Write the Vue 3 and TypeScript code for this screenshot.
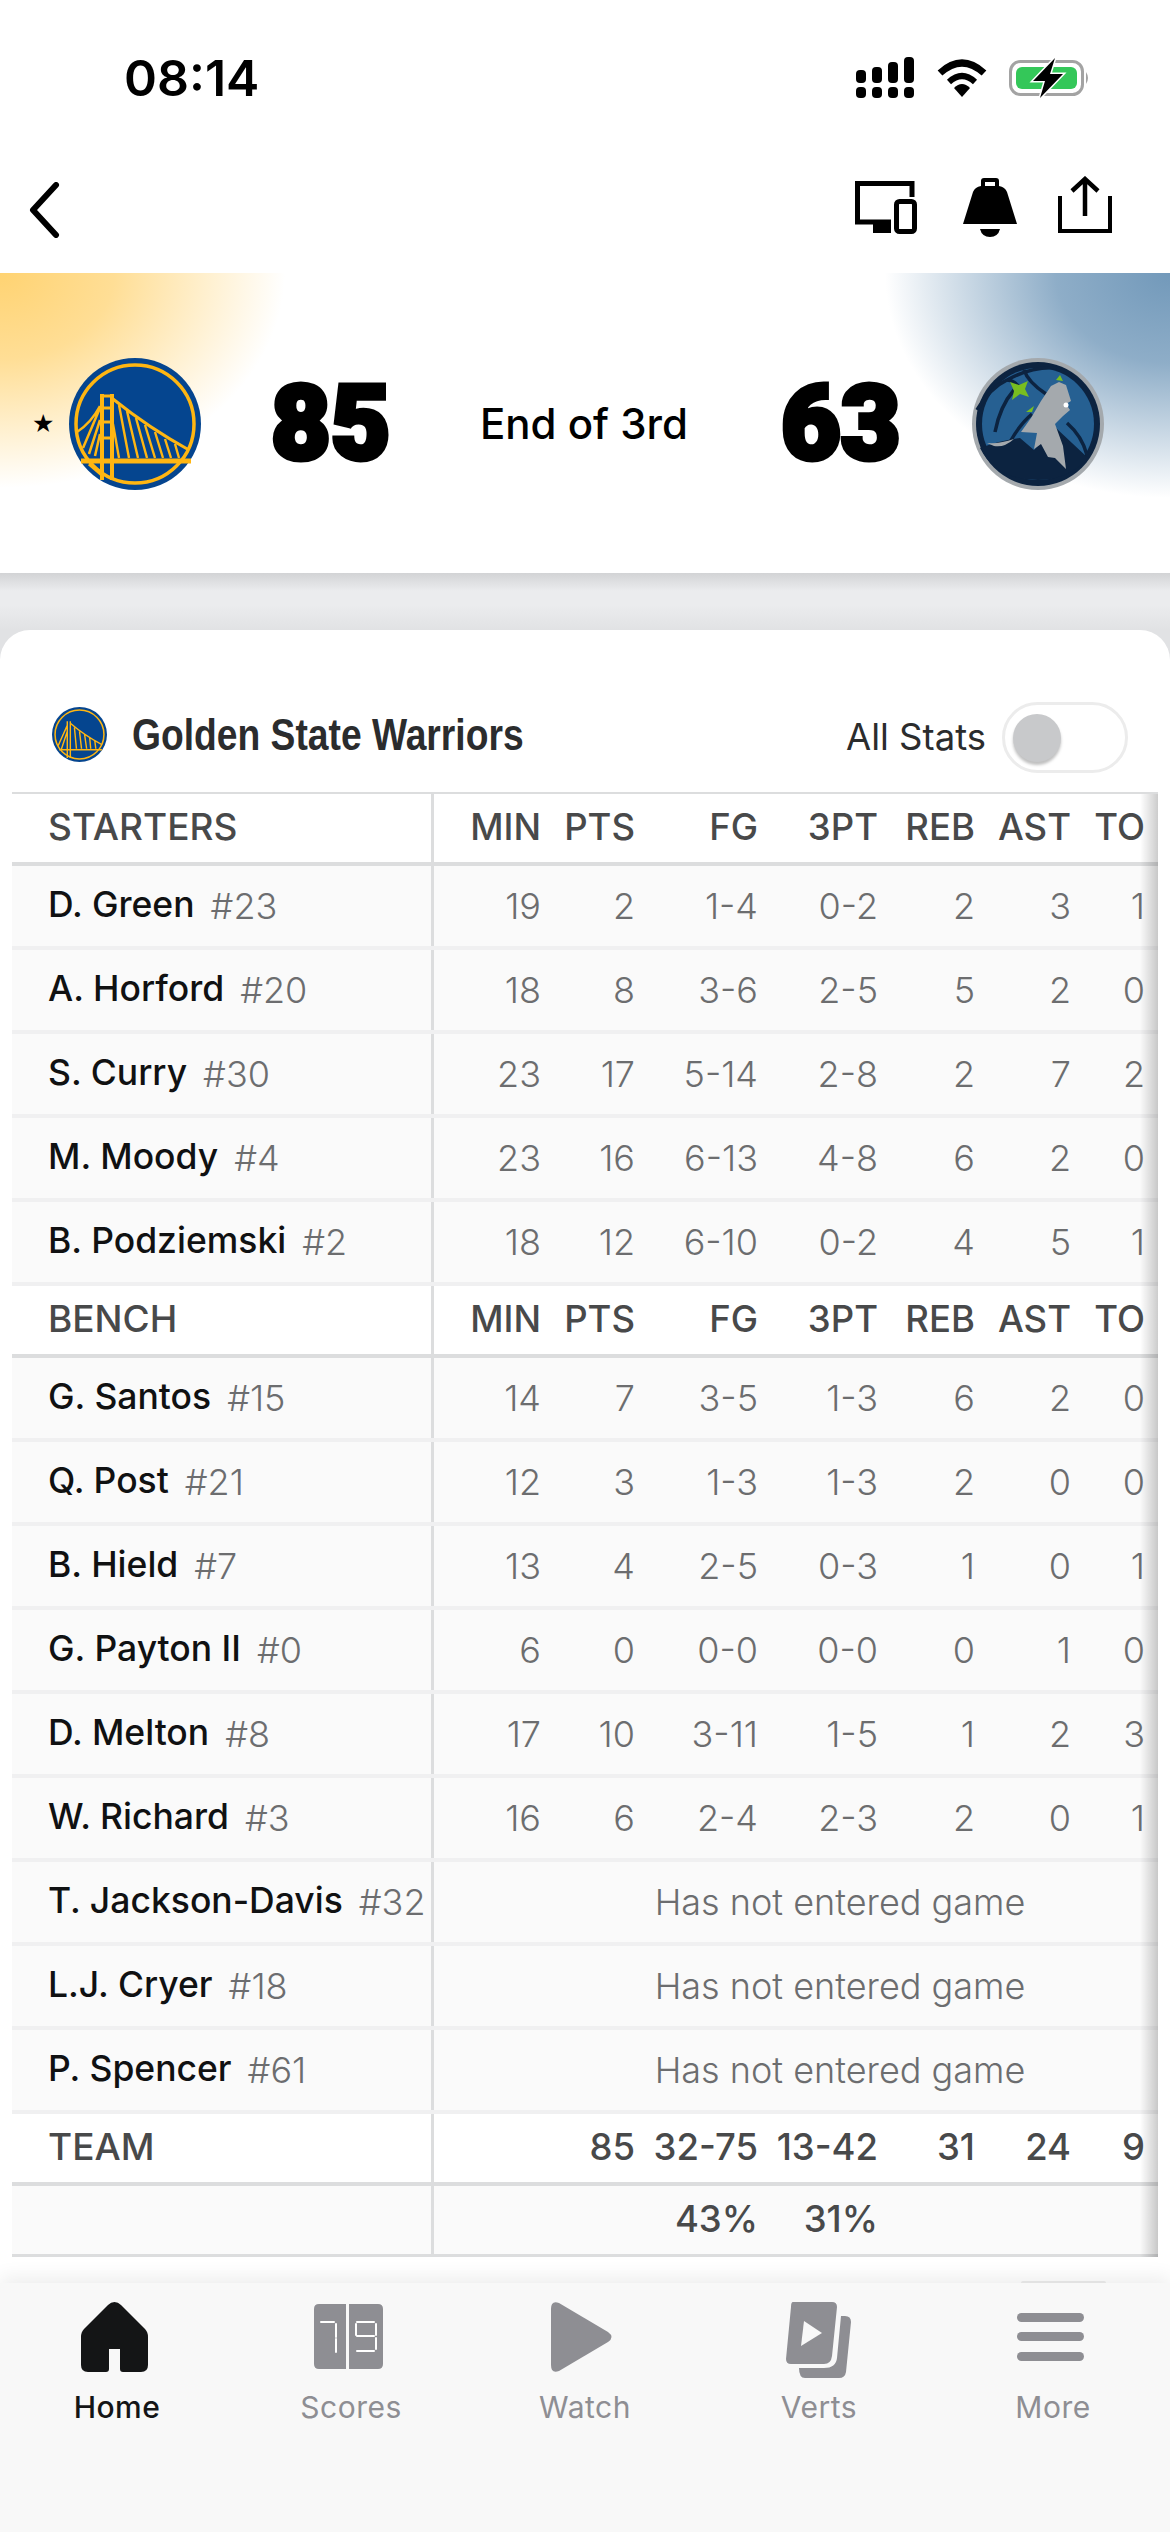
<script setup lang="ts">
interface Player { name: string; num: string; stats?: (string | number)[] }
const cols = ['MIN', 'PTS', 'FG', '3PT', 'REB', 'AST', 'TO']
const starters: Player[] = [
  { name: 'D. Green', num: '#23', stats: [19, 2, '1-4', '0-2', 2, 3, 1] },
  { name: 'A. Horford', num: '#20', stats: [18, 8, '3-6', '2-5', 5, 2, 0] },
  { name: 'S. Curry', num: '#30', stats: [23, 17, '5-14', '2-8', 2, 7, 2] },
  { name: 'M. Moody', num: '#4', stats: [23, 16, '6-13', '4-8', 6, 2, 0] },
  { name: 'B. Podziemski', num: '#2', stats: [18, 12, '6-10', '0-2', 4, 5, 1] },
]
const bench: Player[] = [
  { name: 'G. Santos', num: '#15', stats: [14, 7, '3-5', '1-3', 6, 2, 0] },
  { name: 'Q. Post', num: '#21', stats: [12, 3, '1-3', '1-3', 2, 0, 0] },
  { name: 'B. Hield', num: '#7', stats: [13, 4, '2-5', '0-3', 1, 0, 1] },
  { name: 'G. Payton II', num: '#0', stats: [6, 0, '0-0', '0-0', 0, 1, 0] },
  { name: 'D. Melton', num: '#8', stats: [17, 10, '3-11', '1-5', 1, 2, 3] },
  { name: 'W. Richard', num: '#3', stats: [16, 6, '2-4', '2-3', 2, 0, 1] },
  { name: 'T. Jackson-Davis', num: '#32' },
  { name: 'L.J. Cryer', num: '#18' },
  { name: 'P. Spencer', num: '#61' },
]
const groups = [
  { title: 'STARTERS', players: starters },
  { title: 'BENCH', players: bench },
]
const team = ['', 85, '32-75', '13-42', 31, 24, 9]
const pct = ['', '', '43%', '31%', '', '', '']
</script>

<template>
  <div class="app">
    <div class="top">
      <div class="status">
        <span class="time">08:14</span>
        <div class="status-icons">
          <svg width="60" height="42" viewBox="0 0 60 42">
            <rect x="1" y="13" width="10" height="13" rx="4" /><rect x="17" y="10" width="10" height="16" rx="4" /><rect x="33" y="5" width="10" height="21" rx="4" /><rect x="49" y="0" width="10" height="26" rx="4" />
            <rect x="1" y="30" width="10" height="11" rx="4" /><rect x="17" y="30" width="10" height="11" rx="4" /><rect x="33" y="30" width="10" height="11" rx="4" /><rect x="49" y="30" width="10" height="11" rx="4" />
          </svg>
          <svg width="50" height="38" viewBox="0 0 50 38">
            <path d="M3 14 Q25 -6 47 14" fill="none" stroke="#000" stroke-width="7" />
            <path d="M12 23 Q25 11 38 23" fill="none" stroke="#000" stroke-width="6" />
            <path d="M17 29 Q25 21 33 29 L25 38 Z" />
          </svg>
          <svg width="82" height="40" viewBox="0 0 82 40">
            <rect x="1.5" y="3.5" width="72" height="33" rx="10" fill="none" stroke="#a3a3a3" stroke-width="3" />
            <rect x="7" y="9" width="61" height="22" rx="6" fill="#34c759" />
            <path d="M77 14 Q81 20 77 26 Z" fill="#a3a3a3" />
            <path d="M46 0 L24 23 H36 L31 40 L54 16 H41 Z" stroke="#fff" stroke-width="3" paint-order="stroke" />
          </svg>
        </div>
      </div>
      <div class="nav">
        <svg class="back" width="36" height="56" viewBox="0 0 36 56"><path d="M30 3 L7 28 L30 53" fill="none" stroke="#000" stroke-width="6" stroke-linecap="round" stroke-linejoin="round" /></svg>
        <div class="nav-icons">
          <svg class="i-dev" width="62" height="62" viewBox="0 -5 62 62">
            <path d="M57 16 V2.5 H2.5 V41 H36" fill="none" stroke="#000" stroke-width="5" />
            <rect x="18" y="42" width="18" height="10" />
            <rect x="41.5" y="20.5" width="18" height="30" rx="3" fill="none" stroke="#000" stroke-width="5" />
          </svg>
          <svg class="i-bell" width="54" height="62" viewBox="1 0 54 62">
            <path d="M19 10 V5 Q19 2 22 2 H34 Q37 2 37 5 V10 Q43 11 45 16 L55 48 H1 L11 16 Q13 11 19 10 Z M23 6 V10 H33 V6 Z" fill-rule="evenodd" />
            <path d="M18 53 H38 Q36 61 28 61 Q20 61 18 53 Z" />
          </svg>
          <svg class="i-share" width="54" height="62" viewBox="0 0 54 62">
            <path d="M2 20 V55 H52 V20" fill="none" stroke="#000" stroke-width="4" />
            <path d="M27 40 V4 M14 15 L27 3 L40 15" fill="none" stroke="#000" stroke-width="4.5" />
          </svg>
        </div>
      </div>
    </div>

    <div class="hero">
      <div class="team-side">
        <span class="star">★</span>
        <svg class="logo" viewBox="0 0 132 132">
          <circle cx="66" cy="66" r="66" fill="#05458f" />
          <circle cx="66" cy="66" r="59" fill="none" stroke="#ffb612" stroke-width="3.5" />
          <g stroke="#ffb612" fill="none">
            <path d="M33 36 V122 M43 36 V122" stroke-width="4" />
            <path d="M33 38 h10 M33 50 h10 M33 64 h10 M33 80 h10" stroke-width="3" />
            <path d="M31 48 Q22 65 8 74 M31 50 L14 90 M31 62 L20 96 M31 76 L26 98" stroke-width="2.5" />
            <path d="M44 41 Q80 70 120 92" stroke-width="3" />
            <path d="M50 47 L60 100 M58 53 L69 100 M67 60 L78 100 M76 67 L86 100 M86 74 L94 100 M96 81 L102 100 M106 86 L110 100" stroke-width="2.4" />
            <path d="M44 66 L50 100" stroke-width="2.4" />
            <path d="M12 103 H122" stroke-width="5" />
            <path d="M20 106 L34 118" stroke-width="3" />
          </g>
        </svg>
      </div>
      <span class="score left">85</span>
      <span class="period">End of 3rd</span>
      <span class="score right">63</span>
      <svg class="logo wolves" viewBox="0 0 132 132">
        <circle cx="66" cy="66" r="66" fill="#a4a9ad" />
        <circle cx="66" cy="66" r="62" fill="#0c2340" />
        <circle cx="66" cy="66" r="56" fill="#266092" />
        <path d="M8 90 Q30 82 48 80 L62 92 L84 70 L116 100 Q96 122 66 122 Q24 122 8 90 Z" fill="#0c2340" />
        <g fill="none" stroke="#0c2340" stroke-width="3.5">
          <path d="M5 52 Q18 30 35 22 Q60 8 85 10" />
          <path d="M42 32 Q28 48 23 74" />
          <path d="M52 12 Q56 24 74 36" />
          <path d="M35 22 Q42 22 48 30" />
          <path d="M95 65 Q110 78 115 97" />
          <path d="M60 56 Q48 66 38 84" />
        </g>
        <path d="M79 28 L87 24 L94 27 L99 43 L94 46 L98 52 L91 58 L83 66 L91 88 L94 111 L83 100 L76 99 L69 86 L62 91 L65 75 L49 74 L59 60 L69 43 Z" fill="#a4a9ad" />
        <path d="M15 85 Q28 86 42 81 Q32 90 22 88 Z" fill="#a4a9ad" />
        <path d="M38 24 L47 27 L56 23 L53 31 L57 39 L48 36 L40 42 L42 33 Z" fill="#78be20" />
        <path d="M54 54 L62 48 L60 54 Z M84 22 L88 17 L91 23 Z" fill="#78be20" />
        <circle cx="94" cy="47" r="2.5" fill="#fff" />
      </svg>
    </div>

    <div class="body">
      <div class="card">
        <div class="card-head">
          <div class="card-title">
            <svg class="mini" viewBox="0 0 54 54">
              <circle cx="27" cy="27" r="27" fill="#05458f" />
              <circle cx="27" cy="27" r="24" fill="none" stroke="#ffb612" stroke-width="1.5" />
              <path d="M15 14 V50 M18 14 V50 M15 18 L6 38 M15 24 L9 42 M18 16 Q32 28 49 37 M22 20 L24 41 M27 24 L29 41 M32 27 L34 41 M37 30 L38 41 M42 33 L43 41 M7 42 H49" stroke="#ffb612" stroke-width="1.4" fill="none" />
            </svg>
            <span class="team-name">Golden State Warriors</span>
          </div>
          <div class="toggle-wrap">
            <span class="all">All Stats</span>
            <span class="toggle"><span class="knob"></span></span>
          </div>
        </div>

        <div class="table">
          <template v-for="g in groups" :key="g.title">
            <div class="row head">
              <div class="name-cell">{{ g.title }}</div>
              <div class="stats"><span v-for="c in cols" :key="c" class="c">{{ c }}</span></div>
            </div>
            <div v-for="p in g.players" :key="p.name" class="row player">
              <div class="name-cell">
                <span class="pname">{{ p.name }}</span><span class="pnum">{{ p.num }}</span>
              </div>
              <div v-if="p.stats" class="stats"><span v-for="(s, i) in p.stats" :key="i" class="c">{{ s }}</span></div>
              <div v-else class="stats dnp">Has not entered game</div>
            </div>
          </template>
          <div class="row head">
            <div class="name-cell">TEAM</div>
            <div class="stats"><span v-for="(s, i) in team" :key="i" class="c">{{ s }}</span></div>
          </div>
          <div class="row head pct">
            <div class="name-cell"></div>
            <div class="stats"><span v-for="(s, i) in pct" :key="i" class="c">{{ s }}</span></div>
          </div>
          <div class="edge"></div>
        </div>
      </div>
    </div>

    <div class="tabbar">
      <span class="peek"></span>
      <div class="tab on">
        <svg class="shift" width="67" height="76" viewBox="0 0 67 76"><path d="M33.5 0 Q30 0 27 3 L3 27 Q0 30 0 35 V63 Q0 70 7 70 H25 Q28 70 28 67 V47 H39 V67 Q39 70 42 70 H60 Q67 70 67 63 V35 Q67 30 64 27 L40 3 Q37 0 33.5 0 Z" /></svg>
        <span>Home</span>
      </div>
      <div class="tab">
        <svg class="shift" width="69" height="76" viewBox="0 -2 69 76">
          <path d="M5 0 H32 V65 H5 Q0 65 0 60 V5 Q0 0 5 0 Z M35 0 H64 Q69 0 69 5 V60 Q69 65 64 65 H35 Z" />
          <path d="M7 18 H20 M22 20 V33 M22 35 V48 M43 18 H60 M42 20 V31 M43 32 H60 M62 20 V31 M62 34 V45 M43 47 H60" stroke="#fff" stroke-width="2" stroke-linecap="round" fill="none" />
        </svg>
        <span>Scores</span>
      </div>
      <div class="tab">
        <svg class="shift" width="62" height="76" viewBox="0 0 62 76"><path d="M0 7 Q0 -2 8 1 L57 30 Q64 35 57 40 L8 69 Q0 72 0 63 Z" /></svg>
        <span>Watch</span>
      </div>
      <div class="tab">
        <svg width="66" height="76" viewBox="0 0 66 76">
          <path d="M7 0 H46 Q51 0 51 5 L46 54 Q45 62 38 62 H5 Q0 62 0 57 L5 5 Q5 0 7 0 Z" />
          <path d="M18 19 L36 31 L15 44 Z" fill="#f8f8f8" />
          <path d="M55 14 H59 Q65 14 65 20 L60 70 Q59 76 53 76 H19 Q13 76 13 66 H38 Q50 66 51 56 Z" />
        </svg>
        <span>Verts</span>
      </div>
      <div class="tab">
        <svg class="shift" width="67" height="76" viewBox="0 0 67 76">
          <rect x="0" y="11" width="67" height="9" rx="4.5" /><rect x="0" y="30" width="67" height="9" rx="4.5" /><rect x="0" y="50" width="67" height="9" rx="4.5" />
        </svg>
        <span>More</span>
      </div>
    </div>
  </div>
</template>

<style>
html, body { margin: 0; background: #fff; }
</style>

<style scoped>
.app {
  width: 1170px;
  height: 2532px;
  display: flex;
  flex-direction: column;
  overflow: hidden;
  font-family: Inter, "Liberation Sans", sans-serif;
  color: #000;
  background: #fff;
}
.top { height: 273px; flex: none; display: flex; flex-direction: column; }
.status {
  height: 156px;
  display: flex;
  justify-content: space-between;
  align-items: flex-start;
  padding: 50px 79px 0 124px;
  box-sizing: border-box;
}
.time { font-size: 50px; font-weight: 600; line-height: 56px; }
.status-icons { display: flex; gap: 22px; align-items: center; padding-top: 7px; }
.nav { flex: 1; display: flex; justify-content: space-between; align-items: flex-start; padding: 20px 58px 0 26px; }
.back { margin-top: 6px; }
.nav-icons { display: flex; align-items: flex-start; }
.i-bell { margin-left: 46px; }
.i-share { margin-left: 41px; }
.hero {
  height: 300px;
  flex: none;
  display: flex;
  align-items: flex-start;
  box-sizing: border-box;
  padding-top: 85px;
  background:
    radial-gradient(ellipse 285px 215px at 0 0, #ffd372 0%, rgba(255, 211, 114, 0.75) 40%, rgba(255, 211, 114, 0) 100%),
    radial-gradient(ellipse 285px 225px at 100% 0, #7299ba 0%, rgba(114, 153, 186, 0.8) 40%, rgba(114, 153, 186, 0) 100%),
    #fff;
}
.team-side { display: flex; align-items: center; padding-left: 32px; gap: 17px; }
.star { font-size: 25px; line-height: 132px; width: 20px; font-family: "DejaVu Sans", sans-serif; }
.logo { width: 132px; height: 132px; flex: none; display: block; }
.score {
  font-family: Roboto, "Liberation Sans", sans-serif;
  font-weight: 900;
  font-size: 103px;
  line-height: 132px;
  -webkit-text-stroke: 5px #000;
  letter-spacing: 0;
  width: 116px;
  flex: none;
  white-space: nowrap;
}
.left { margin-left: 70px; }
.period { width: 394px; flex: none; text-align: center; font-size: 42px; font-weight: 500; line-height: 132px; }
.wolves { margin-left: 75px; }
.body {
  flex: 1;
  min-height: 0;
  padding-top: 57px;
  display: flex;
  flex-direction: column;
  background: linear-gradient(#d2d3d5 0, #ebecee 18px, #ebecee 32px, #e1e2e4 57px, #e1e2e4 90px) top / 100% 90px no-repeat, #fff;
}
.card { flex: 1; background: #fff; border-radius: 30px 30px 0 0; padding: 0 12px; }
.card-head { height: 162px; box-sizing: border-box; padding: 77px 30px 0 40px; display: flex; justify-content: space-between; align-items: flex-start; }
.card-title { display: flex; align-items: center; gap: 25px; height: 55px; }
.mini { width: 55px; height: 55px; display: block; }
.team-name { font-family: "Liberation Sans", sans-serif; font-weight: 700; font-size: 44px; color: #2b2c2d; transform: scaleX(0.846); transform-origin: left center; white-space: nowrap; }
.toggle-wrap { display: flex; align-items: center; gap: 16px; height: 71px; margin-top: -5px; }
.all { font-size: 36.5px; color: #2b2c2d; margin-bottom: 2px; }
.toggle { width: 126px; height: 71px; box-sizing: border-box; border: 3px solid #ececec; border-radius: 36px; display: flex; align-items: center; padding-left: 8px; }
.knob { width: 48px; height: 48px; background: #c8c9cb; border-radius: 50%; box-shadow: 0 3px 3px rgba(0, 0, 0, 0.25); }
.table { width: 1146px; position: relative; border-top: 2px solid #dcddde; }
.row { display: flex; height: 84px; box-sizing: border-box; border-bottom: 4px solid #f0f0f1; background: #fafafa; }
.row.head { height: 72px; background: #fff; border-bottom: 4px solid #dcddde; }
.row.head.pct { height: 71px; background: #fafafa; border-bottom-width: 3px; }
.name-cell { width: 422px; flex: none; box-sizing: border-box; border-right: 3px solid #dcddde; padding-left: 36px; display: flex; align-items: center; gap: 16px; white-space: nowrap; }
.head .name-cell { font-size: 37px; color: #48494a; font-weight: 500; padding-bottom: 3px; }
.head .stats { font-size: 36.5px; color: #48494a; font-weight: 500; padding-bottom: 3px; }
.pname { font-size: 35.5px; font-weight: 500; color: #101112; margin-bottom: 4px; }
.pnum { font-size: 36px; color: #6c6d6f; font-weight: 300; }
.stats { flex: 1; display: grid; grid-template-columns: 107px 94px 123px 120px 97px 96px 74px; align-items: center; font-size: 36px; color: #6c6d6f; font-weight: 300; padding-right: 13px; }
.c { text-align: right; white-space: nowrap; }
.dnp { display: flex; justify-content: center; padding: 0 0 0 88px; }
.edge { position: absolute; top: 0; right: 0; bottom: 0; width: 18px; background: linear-gradient(90deg, rgba(0,0,0,0), rgba(0,0,0,0.2)); pointer-events: none; }
.tabbar {
  height: 249px;
  flex: none;
  background: #f8f8f8;
  display: grid;
  grid-template-columns: repeat(5, 234px);
  align-items: start;
  position: relative;
  box-shadow: 0 -6px 18px rgba(0, 0, 0, 0.07);
}
.peek { position: absolute; left: 1021px; top: -2px; width: 85px; height: 2px; border-radius: 6px 6px 0 0; background: #e2e2e2; }
.tab { display: flex; flex-direction: column; align-items: center; padding-top: 19px; color: #8e8e93; font-size: 30px; line-height: 36px; letter-spacing: 0.5px; }
.tab span { margin-top: 11px; }
.tab svg { fill: #8e8e93; display: block; }
.tab svg.shift { margin-right: 6px; }
.tab.on { color: #141516; font-weight: 500; }
.tab.on svg { fill: #141516; }
</style>
